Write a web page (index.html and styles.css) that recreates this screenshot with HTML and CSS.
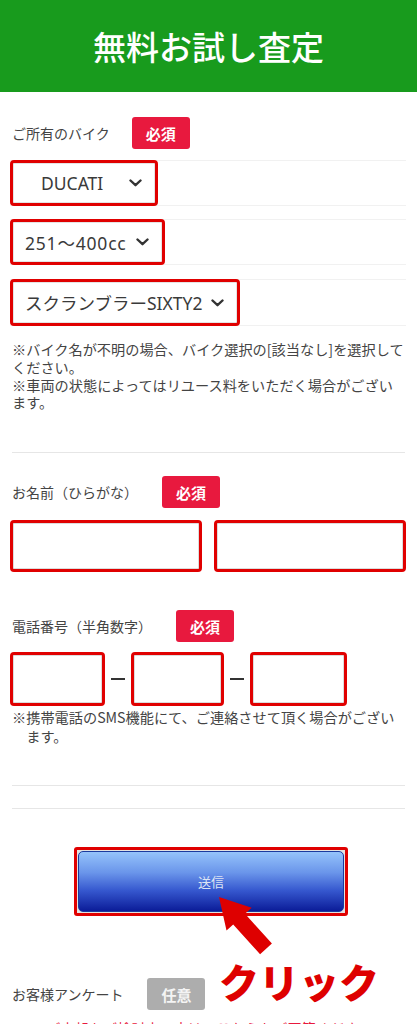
FILE: index.html
```html
<!DOCTYPE html>
<html lang="ja">
<head>
<meta charset="utf-8">
<title>無料お試し査定</title>
<link rel="stylesheet" href="styles.css">
</head>
<body>
<header class="hero"><h1>無料お試し査定</h1></header>
<main class="form">
  <section class="field field-bike">
    <div class="field-head"><span class="label">ご所有のバイク</span><span class="badge req b1">必須</span></div>
    <div class="select-row r1">
      <div class="select s-maker"><span>DUCATI</span><svg class="chev" viewBox="0 0 13 8"><polyline points="1.5,1.5 6.5,6.2 11.5,1.5"/></svg></div>
    </div>
    <div class="select-row r2">
      <div class="select s-cc"><span>251〜400cc</span><svg class="chev" viewBox="0 0 13 8"><polyline points="1.5,1.5 6.5,6.2 11.5,1.5"/></svg></div>
    </div>
    <div class="select-row r3">
      <div class="select s-model"><span>スクランブラーSIXTY2</span><svg class="chev" viewBox="0 0 13 8"><polyline points="1.5,1.5 6.5,6.2 11.5,1.5"/></svg></div>
    </div>
    <p class="note note-bike">※バイク名が不明の場合、バイク選択の[該当なし]を選択してください。<br>※車両の状態によってはリユース料をいただく場合がございます。</p>
  </section>
  <div class="divider d1"></div>
  <section class="field field-name">
    <div class="field-head"><span class="label">お名前（ひらがな）</span><span class="badge req">必須</span></div>
    <div class="name-inputs">
      <div class="input"></div>
      <div class="input"></div>
    </div>
  </section>
  <section class="field field-tel">
    <div class="field-head"><span class="label">電話番号（半角数字）</span><span class="badge req">必須</span></div>
    <div class="tel-inputs">
      <div class="input t1"></div><span class="dash"></span>
      <div class="input t2"></div><span class="dash"></span>
      <div class="input t3"></div>
    </div>
    <p class="note note-tel">※携帯電話のSMS機能にて、ご連絡させて頂く場合がございます。</p>
  </section>
  <div class="divider d2"></div>
  <div class="divider d3"></div>
  <div class="submit-wrap">
    <div class="submit-outline"><div class="submit-btn">送信</div></div>
    <svg class="arrow" viewBox="200 890 90 70"><polygon points="219,897 251.7,907.8 245,913.8 271.9,943.5 260.1,954.3 233.2,924.6 226.5,930.6"/></svg>
    <span class="click-text">クリック</span>
  </div>
  <section class="field field-survey">
    <div class="field-head"><span class="label">お客様アンケート</span><span class="badge opt">任意</span></div>
    <p class="note note-red">※ご売却をご検討中の方は、こちらもご回答ください。</p>
  </section>
</main>
</body>
</html>
```
FILE: styles.css
```css
body {
  margin: 0;
  background: #fff;
  color: #444;
  font-family: "Noto Sans CJK JP", "Noto Sans", sans-serif;
}

.hero {
  height: 92px;
  background: #189b1d;
  display: flex;
  align-items: center;
  justify-content: center;
}

.hero h1 {
  margin: 0;
  font-size: 33px;
  font-weight: 500;
  line-height: 1;
  color: #fff;
}

.form {
  padding: 0 11px 0 10px;
}

.field-head {
  display: flex;
  align-items: center;
  height: 32px;
  padding-left: 2px;
}

.label {
  font-size: 14px;
  color: #444;
}

.badge {
  margin-left: 24px;
  width: 58px;
  height: 32px;
  border-radius: 3px;
  display: flex;
  align-items: center;
  justify-content: center;
  font-size: 15px;
  font-weight: 700;
  color: #fff;
}

.badge.b1 { margin-left: 22px; }
.badge.req { background: #e8193e; }
.badge.opt { background: #adadad; color: #f4f4f4; }

.field-bike { padding-top: 25px; }

.select-row {
  display: flex;
  background:
    linear-gradient(#f1f1f1, #f1f1f1) top / 100% 1px no-repeat,
    linear-gradient(#f1f1f1, #f1f1f1) bottom / 100% 1px no-repeat;
}

.r1 { margin-top: 11px; }
.r2 { margin-top: 13px; }
.r3 { margin-top: 14px; }

.select {
  display: inline-flex;
  align-items: center;
  height: 46px;
  box-sizing: border-box;
  border: 3px solid #e00000;
  border-radius: 4px;
  background: #fff;
  box-shadow: inset 0 0 0 1px #e4e4e4;
  font-family: "Noto Sans", "Noto Sans CJK JP", sans-serif;
  font-size: 17.5px;
  color: #3a3a3a;
  padding: 0 13px 0 12px;
  gap: 9px;
}

.s-maker { padding: 0 13px 0 28px; gap: 26px; }
.s-cc span { letter-spacing: 0.8px; }
.s-model { height: 47px; }

.chev {
  width: 13px;
  height: 8px;
  fill: none;
  stroke: #333;
  stroke-width: 2.4;
  stroke-linecap: round;
  stroke-linejoin: round;
}

.note {
  margin: 0;
  padding-left: 2px;
  font-size: 14.2px;
  line-height: 17.75px;
  color: #444;
}

.note-bike { margin-top: 15px; }

.divider {
  height: 1px;
  background: #e6e6e6;
  margin: 0 1px 0 2px;
}

.d1 { margin-top: 40px; }
.d2 { margin-top: 39px; }
.d3 { margin-top: 22px; }

.field-name { padding-top: 23px; }

.input {
  height: 52px;
  box-sizing: border-box;
  border: 3px solid #e00000;
  border-radius: 4px;
  background: #fff;
  box-shadow: inset 0 0 0 1px #dcdcdc;
}

.name-inputs {
  margin-top: 12px;
  display: grid;
  grid-template-columns: 1fr 1fr;
  gap: 12px;
}

.field-tel { padding-top: 38px; }

.tel-inputs {
  margin-top: 10px;
  display: flex;
  align-items: center;
}

.tel-inputs .input { height: 54px; }
.t1 { width: 95px; }
.t2 { width: 93px; }
.t3 { width: 97px; }

.dash {
  width: 14px;
  height: 2.5px;
  background: #333;
  margin: 0 6px;
}

.note-tel {
  margin-top: 2px;
  padding-left: calc(2px + 1em);
  text-indent: -1em;
  line-height: 19px;
}

.submit-wrap {
  position: relative;
  margin-top: 38px;
  padding-left: 6px;
  display: flex;
  justify-content: center;
}

.submit-outline {
  width: 274px;
  height: 69px;
  box-sizing: border-box;
  border: 3px solid #e00000;
  border-radius: 3px;
  padding: 1px;
  background: #e2e2e2;
}

.submit-btn {
  height: 100%;
  box-sizing: border-box;
  border: 1px solid #1b3a9e;
  border-radius: 5px;
  background: linear-gradient(#95c3fb 0%, #6a95ea 35%, #3658cf 65%, #0b1c98 100%);
  display: flex;
  align-items: center;
  justify-content: center;
  font-size: 13px;
  color: #dde4f4;
}

.arrow {
  position: absolute;
  left: 190px;
  top: 43px;
  width: 90px;
  height: 70px;
  fill: #de0000;
}

.click-text {
  position: absolute;
  left: 209px;
  top: 114px;
  font-size: 40px;
  font-weight: 900;
  line-height: 1;
  color: #de0000;
  white-space: nowrap;
}

.field-survey { padding-top: 62px; }

.note-red {
  margin-top: 10px;
  color: #e8193e;
  padding-left: 22px;
}
```
